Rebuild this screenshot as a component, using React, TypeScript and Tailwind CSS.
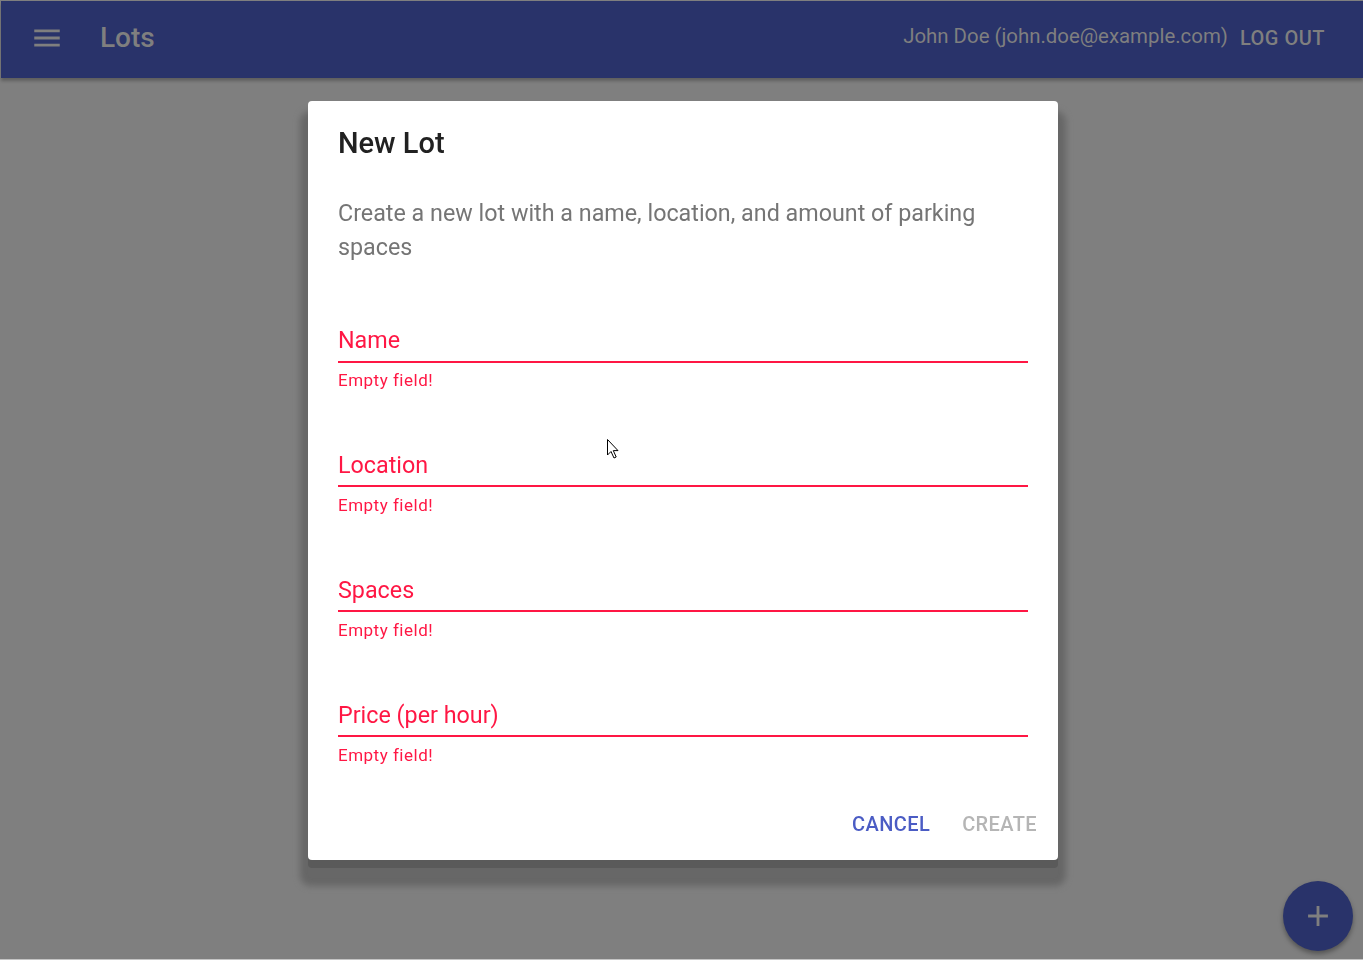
import React from "react";

const fields = ["Name", "Location", "Spaces", "Price (per hour)"];

function MenuIcon() {
  return (
    <svg width="34" height="34" viewBox="0 0 24 24" fill="#7f7f7f">
      <path d="M3 18h18v-2H3v2zm0-5h18v-2H3v2zm0-7v2h18V6H3z" />
    </svg>
  );
}

function AddIcon() {
  return (
    <svg width="34" height="34" viewBox="0 0 24 24" fill="#7f7f7f">
      <path d="M19 13h-6v6h-2v-6H5v-2h6V5h2v6h6v2z" />
    </svg>
  );
}

function Field({ label, first }: { label: string; first?: boolean }) {
  return (
    <div className={first ? "mt-[63px]" : "mt-[62.3px]"}>
      <div className="h-[33.5px] text-[23.3px] leading-[26px] text-[#ff1744]">{label}</div>
      <div className="h-[2px] bg-[#ff1744]" />
      <div className="mt-[7.2px] h-[20px] text-[17px] leading-[20px] tracking-[0.5px] text-[#ff1744]">
        Empty field!
      </div>
    </div>
  );
}

export default function App() {
  return (
    <div
      className="relative h-[960px] overflow-hidden border-b border-[#c4c4c4] bg-[#7f7f7f] pl-[1px] pt-[1px]"
      style={{ fontFamily: "Roboto, 'Liberation Sans', sans-serif" }}
    >
      <header className="flex h-[77px] items-center bg-[#29336a] pb-[4px] shadow-[0_3px_3px_rgba(0,0,0,0.25)]">
        <div className="ml-[29px]">
          <MenuIcon />
        </div>
        <div className="ml-[36px] text-[28px] font-medium text-[#7f7f7f]">Lots</div>
        <div className="mb-[3px] ml-auto text-[20.4px] text-[#7f7f7f]">John Doe (john.doe@example.com)</div>
        <div className="ml-[12px] mr-[38px] text-[20px] font-medium uppercase tracking-[0.5px] text-[#7f7f7f]">
          Log out
        </div>
      </header>

      <div className="fixed inset-0 flex items-center justify-center pl-[3px]">
        <div className="flex h-[759px] w-[750px] flex-col rounded-[4px] bg-white px-[30px] shadow-[0_8px_0_0_#5a5a5a,0_18px_6px_8px_#676767]">
          <div className="pt-[20px] text-[29px] font-medium leading-[44px] text-[#212121]">New Lot</div>
          <p className="mt-[31.5px] text-[23.3px] leading-[34px] text-[#757575]">
            Create a new lot with a name, location, and amount of parking spaces
          </p>
          {fields.map((f, i) => (
            <Field key={f} label={f} first={i === 0} />
          ))}
          <div className="mt-auto mb-[14px] -mr-[30px] flex justify-end gap-[12px] pr-[11px]">
            <button className="h-[44px] px-[10px] text-[20px] font-medium uppercase tracking-[0.4px] text-[#4b5cc4]">
              Cancel
            </button>
            <button className="h-[44px] px-[10px] text-[20px] font-medium uppercase tracking-[0.4px] text-[#b5b5b5]">
              Create
            </button>
          </div>
        </div>
      </div>

      <button className="fixed left-[1283px] top-[881px] flex h-[70px] w-[70px] items-center justify-center rounded-full bg-[#29336a] shadow-[0_3px_5px_rgba(0,0,0,0.35)]">
        <AddIcon />
      </button>

      <svg className="fixed left-[607px] top-[439px]" width="14" height="21" viewBox="0 0 14 21">
        <path d="M0.5 0.5 L0.5 16 L4 12.5 L7 19 L9.2 18 L6.3 11.6 L11 11.6 Z" fill="white" stroke="black" strokeWidth="1" />
      </svg>
    </div>
  );
}
